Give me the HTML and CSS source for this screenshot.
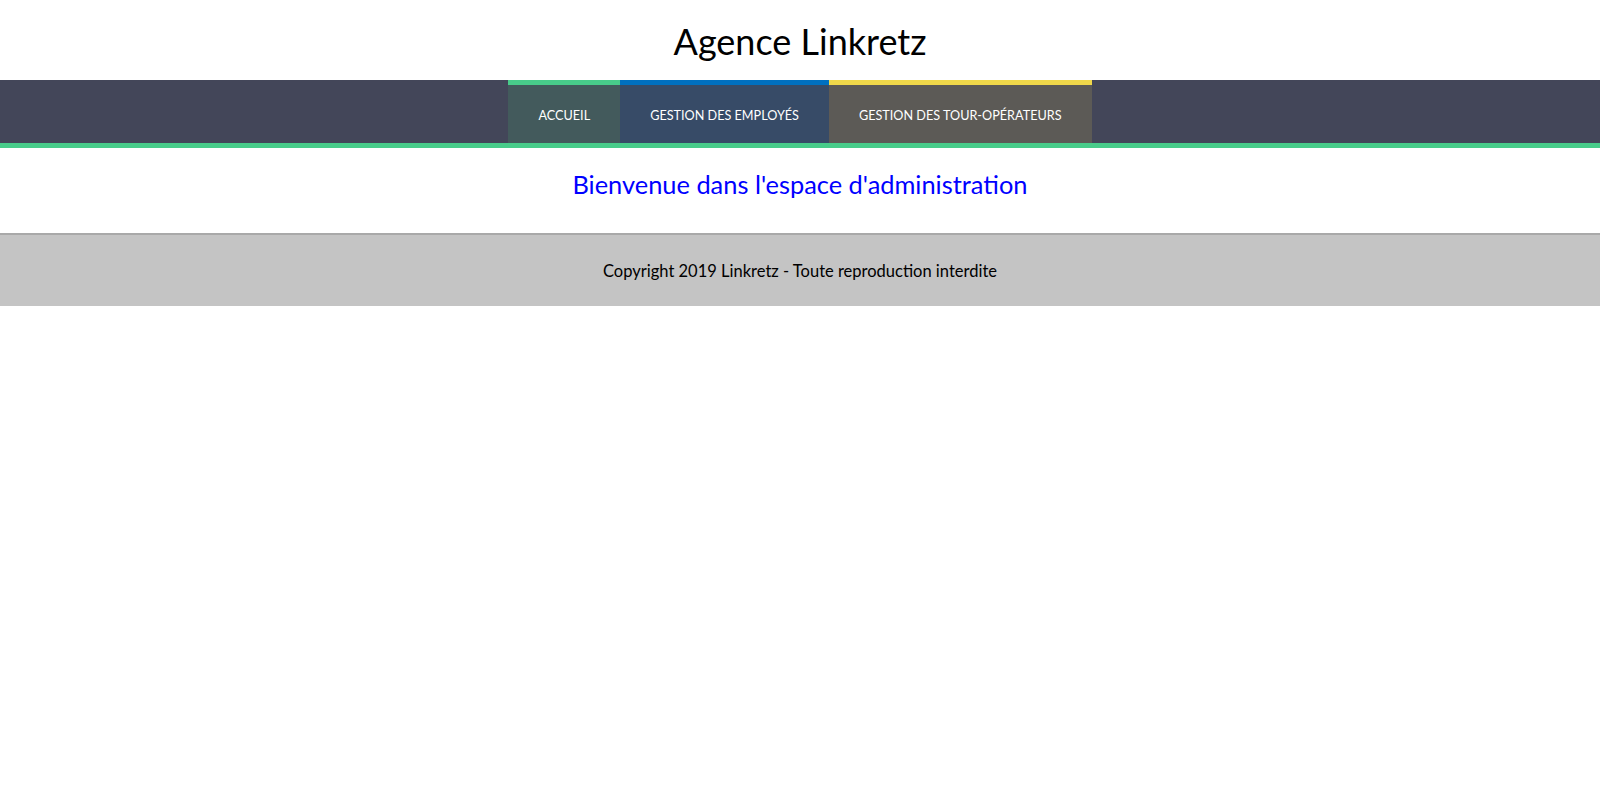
FILE: index.html
```html
<!DOCTYPE html>
<html lang="fr">
<head>
<meta charset="utf-8">
<title>Agence Linkretz</title>
<link rel="stylesheet" href="styles.css">
</head>
<body>
<header class="site-header">
  <h1 class="site-title">Agence Linkretz</h1>
</header>
<nav class="main-nav">
  <ul class="nav-list">
    <li class="nav-item nav-home"><a href="#">Accueil</a></li>
    <li class="nav-item nav-employees"><a href="#">Gestion des employés</a></li>
    <li class="nav-item nav-operators"><a href="#">Gestion des tour-opérateurs</a></li>
  </ul>
</nav>
<main class="content">
  <h2 class="welcome">Bienvenue dans l'espace d'administration</h2>
</main>
<footer class="site-footer">
  <p>Copyright 2019 Linkretz - Toute reproduction interdite</p>
</footer>
</body>
</html>
```
FILE: styles.css
```css
* { box-sizing: border-box; }
html, body { margin: 0; padding: 0; background: #fff; }
body { font-family: "Lato", "Open Sans", sans-serif; color: #000; }

.site-header {
  height: 80px;
  display: flex;
  align-items: center;
  justify-content: center;
}
.site-title {
  margin: 0;
  font-weight: 400;
  font-size: 36px;
  line-height: 1;
  padding-top: 2px;
}

.main-nav {
  background: #434659;
  border-bottom: 5px solid #48cc8a;
}
.nav-list {
  list-style: none;
  margin: 0;
  padding: 0;
  display: flex;
  justify-content: center;
}
.nav-item a {
  display: block;
  height: 63px;
  padding: 4px 30px 0;
  border-top: 5px solid transparent;
  line-height: 54px;
  color: #fff;
  text-decoration: none;
  text-transform: uppercase;
  font-size: 12.65px;
}
.nav-home a { background: #435a5c; border-top-color: #48cc8a; }
.nav-employees a { background: #374b67; border-top-color: #0070c0; }
.nav-operators a { background: #5c5a56; border-top-color: #f0d84a; }

.content {
  height: 85px;
  padding-top: 20px;
}
.welcome {
  margin: 0;
  text-align: center;
  font-weight: 400;
  font-size: 25.4px;
  line-height: 32px;
  color: #0000ff;
}

.site-footer {
  background: #c4c4c4;
  border-top: 2px solid #a9a9a9;
  height: 73px;
  display: flex;
  align-items: center;
  justify-content: center;
}
.site-footer p {
  margin: 0;
  font-size: 16.5px;
}
```
